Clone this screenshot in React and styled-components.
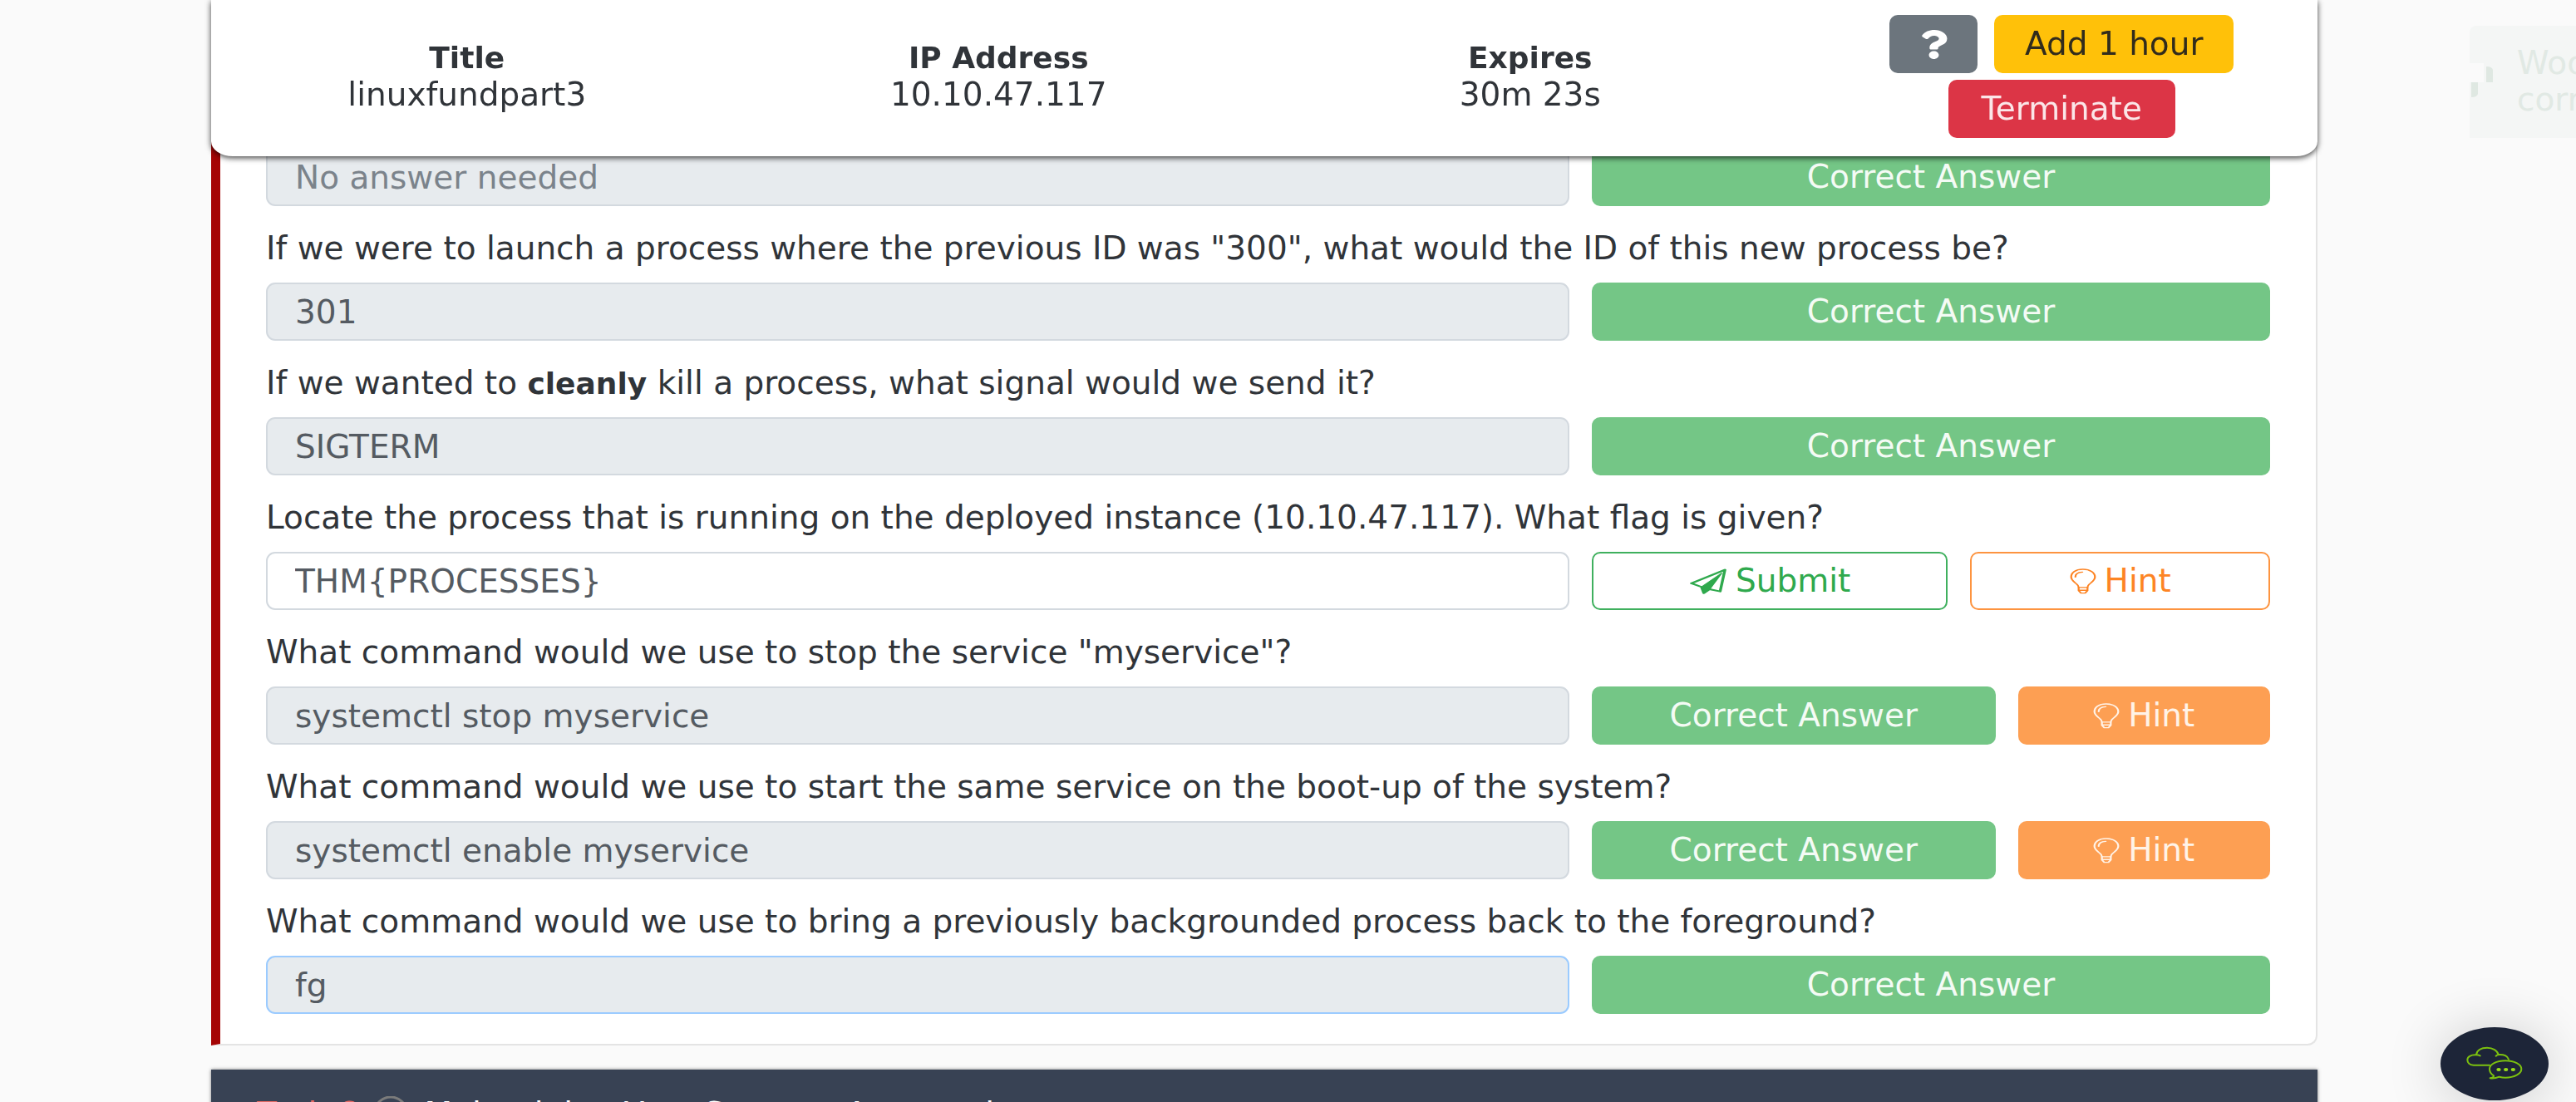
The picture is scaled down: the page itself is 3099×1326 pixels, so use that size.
import React from "react";
import styled, { createGlobalStyle, css } from "styled-components";
import { FaQuestion } from "react-icons/fa";

const GlobalStyle = createGlobalStyle`
  *, *::before, *::after { box-sizing: border-box; }
  html, body { margin: 0; }
  body, button, input {
    font-family: "DejaVu Sans", "Noto Sans", sans-serif;
    font-size: 39px;
    line-height: 44px;
  }
  b { font-size: 36px; }
  body { background: #fafafa; color: #303439; }
`;

const Shell = styled.div`
  height: 100vh;
  overflow: hidden;
  padding: 120px 311px 0 254px;
`;

const MachineBar = styled.header`
  position: fixed;
  z-index: 2;
  top: 0;
  left: 254px;
  right: 311px;
  padding: 18px 0 22px;
  background: #fff;
  border-radius: 0 0 26px 26px / 0 0 18px 18px;
  box-shadow: 0 2px 7px rgba(0, 0, 0, 0.75);
`;

const MachineGrid = styled.div`
  display: grid;
  grid-template-columns: repeat(4, 1fr);
  align-items: center;
  margin: 0 -12px;
  text-align: center;
`;

const FactName = styled.div`
  font-size: 36px;
  font-weight: 700;
`;

const Controls = styled.div`
  display: flex;
  flex-wrap: wrap;
  justify-content: center;
  gap: 8px 20px;
  padding: 0 60px;
`;

const tones = {
  grey: css`background: #6c757d; color: #fff;`,
  yellow: css`background: #ffc109; color: #322c1c;`,
  red: css`background: #dc3546; color: #fbe6e8;`,
  green: css`background: #74c686; color: #f4fbf5;`,
  orange: css`background: #fd9f53; color: #fff3e8;`,
  outlineGreen: css`background: #fff; border-color: #3fb05e; color: #2fa94d;`,
  outlineOrange: css`background: #fff; border-color: #fd9440; color: #fd8424;`,
};

const Button = styled.button`
  display: flex;
  align-items: center;
  justify-content: center;
  gap: 10px;
  height: 70px;
  min-width: ${(p) => (p.$width ? `${p.$width}px` : "0")};
  padding: 0 12px;
  border: 2px solid transparent;
  background-clip: border-box;
  border-radius: 10px;
  white-space: nowrap;
  ${(p) => tones[p.$tone]}
  ${(p) => !p.$tone.startsWith("outline") && "border: 0;"}
`;

const QuestionMark = styled(FaQuestion)`
  width: 33px;
  height: 35px;
`;

const Card = styled.main`
  display: grid;
  gap: 29px;
  padding: 58px 55px 36px;
  background: #fff;
  border: solid #e4e4e4;
  border-width: 0 2px 2px 0;
  border-left: 11px solid #a50505;
  border-radius: 0 0 12px 0;
`;

const Question = styled.section`
  display: grid;
  gap: 19px;
`;

const QuestionText = styled.label`
  display: block;
  height: 44px;
  white-space: nowrap;
`;

const AnswerRow = styled.div`
  display: grid;
  grid-template-columns: 98fr 51fr;
  gap: 27px;
`;

const AnswerInput = styled.input`
  min-width: 0;
  width: 100%;
  height: 70px;
  padding: 0 33px;
  border: 2px solid ${(p) => (p.$active ? "#9bcbff" : "#d3d9df")};
  border-radius: 11px;
  background: ${(p) => (p.readOnly ? "#e7ebee" : "#fff")};
  color: #555b62;
  outline: none;
  &::placeholder { color: #7b838b; opacity: 1; }
`;

const Actions = styled.div`
  display: grid;
  grid-template-columns: ${(p) => p.$columns};
  gap: 27px;
`;

const TaskHeader = styled.section`
  display: flex;
  align-items: center;
  gap: 18px;
  margin-top: 29px;
  padding: 32px 55px;
  background: #384254;
  color: #fff;
  box-shadow: 0 0 4px rgba(0, 0, 0, 0.5);
`;

const TaskNumber = styled.span`
  color: #e96a64;
`;

const TaskTitle = styled.span`
  flex: 1;
`;

const Toast = styled.aside`
  position: fixed;
  top: 31px;
  right: 0;
  width: 128px;
  height: 135px;
  padding: 23px 0 0 57px;
  overflow: hidden;
  white-space: nowrap;
  background: #f4f6f5;
  border-radius: 8px 0 0 0;
  color: #e1e9e4;
`;

const ToastMark = styled.svg`
  position: absolute;
  left: 0;
  top: 45px;
  width: 30px;
  height: 44px;
`;

const ChatButton = styled.button`
  position: fixed;
  right: 33px;
  bottom: 2px;
  display: grid;
  place-items: center;
  width: 130px;
  height: 88px;
  padding: 0;
  border: 0;
  border-radius: 50%;
  background: #1d2538;
  box-shadow: 0 4px 70px rgba(0, 0, 0, 0.2);
`;

const stroke = { fill: "none", stroke: "currentColor", strokeLinejoin: "round", strokeLinecap: "round" };

const PlaneIcon = () => (
  <svg width="46" height="31" viewBox="257 128 80 92" preserveAspectRatio="none" aria-hidden="true" {...stroke} strokeWidth="6">
    <path d="M332 133 322 210 300 202 288 216 283 194 262 181Z" />
    <path d="M283 194 325 145 300 202 288 216Z" fill="currentColor" strokeWidth="3" />
  </svg>
);

const BulbIcon = () => (
  <svg width="32" height="31" viewBox="1036 130 57 91" preserveAspectRatio="none" aria-hidden="true" {...stroke} strokeWidth="4">
    <path d="M1064 133C1048 133 1039 145 1039 160 1039 171 1045 177 1050 184 1053 188 1055 192 1055 197H1074C1074 192 1076 188 1079 184 1084 177 1090 171 1090 160 1090 145 1080 133 1064 133Z" />
    <path d="M1048 160C1048 150 1053 144 1063 143M1055 197V208L1060 217H1069L1074 208V197M1056 207H1073" />
  </svg>
);

const CloudChatIcon = () => (
  <svg width="68" height="42" viewBox="202 122 204 126" aria-hidden="true" fill="none" stroke="#7cc10f" strokeWidth="6" strokeLinecap="round" strokeLinejoin="round">
    <path d="M286 190H228C213 190 206 180 206 171 206 160 218 152 238 153 240 136 256 127 277 127 298 127 315 138 318 152 338 150 352 158 355 169M238 153q8 0 14 3M318 152q-7 2-9 5" />
    <path d="M301 228C290 222 286 213 286 204 286 187 311 174 343 174 375 174 401 187 401 204 401 221 375 235 343 235 335 235 328 234 321 232 312 236 300 239 288 237 297 235 302 233 301 228Z" />
    <g fill="#9be01a" stroke="none">
      <ellipse cx="319" cy="206" rx="8" ry="6" />
      <ellipse cx="345" cy="206" rx="8" ry="6" />
      <ellipse cx="371" cy="206" rx="8" ry="6" />
    </g>
  </svg>
);

const facts = [
  ["Title", "linuxfundpart3"],
  ["IP Address", "10.10.47.117"],
  ["Expires", "30m 23s"],
];

const questions = [
  { id: "q0", placeholder: "No answer needed", answer: "" },
  { id: "q1", text: 'If we were to launch a process where the previous ID was "300", what would the ID of this new process be?', answer: "301" },
  { id: "q2", text: <>If we wanted to <b>cleanly</b> kill a process, what signal would we send it?</>, answer: "SIGTERM" },
  { id: "q3", text: "Locate the process that is running on the deployed instance (10.10.47.117). What flag is given?", answer: "THM{PROCESSES}", open: true, hint: true },
  { id: "q4", text: 'What command would we use to stop the service "myservice"?', answer: "systemctl stop myservice", hint: true },
  { id: "q5", text: "What command would we use to start the same service on the boot-up of the system?", answer: "systemctl enable myservice", hint: true },
  { id: "q6", text: "What command would we use to bring a previously backgrounded process back to the foreground?", answer: "fg", active: true },
];

function QuestionItem({ id, text, answer, placeholder, open, hint, active }) {
  const columns = !hint ? "1fr" : open ? "19fr 16fr" : "8fr 5fr";
  return (
    <Question>
      {text && <QuestionText htmlFor={id}>{text}</QuestionText>}
      <AnswerRow>
        <AnswerInput
          id={id}
          defaultValue={answer}
          placeholder={placeholder}
          aria-label={text ? undefined : placeholder}
          readOnly={!open}
          $active={active}
        />
        <Actions $columns={columns}>
          {open ? (
            <Button type="button" $tone="outlineGreen"><PlaneIcon />Submit</Button>
          ) : (
            <Button type="button" $tone="green">Correct Answer</Button>
          )}
          {hint && (
            <Button type="button" $tone={open ? "outlineOrange" : "orange"}><BulbIcon />Hint</Button>
          )}
        </Actions>
      </AnswerRow>
    </Question>
  );
}

export default function App() {
  return (
    <>
      <GlobalStyle />
      <MachineBar>
        <MachineGrid>
          {facts.map(([name, value]) => (
            <div key={name}>
              <FactName>{name}</FactName>
              <div>{value}</div>
            </div>
          ))}
          <Controls>
            <Button type="button" $tone="grey" $width={106} aria-label="Help">
              <QuestionMark preserveAspectRatio="none" />
            </Button>
            <Button type="button" $tone="yellow" $width={288}>Add 1 hour</Button>
            <Button type="button" $tone="red" $width={273}>Terminate</Button>
          </Controls>
        </MachineGrid>
      </MachineBar>
      <Shell>
        <Card>
          {questions.map((q) => <QuestionItem key={q.id} {...q} />)}
        </Card>
        <TaskHeader>
          <TaskNumber>Task 6</TaskNumber>
          <svg width="44" height="44" viewBox="0 0 44 44" fill="none" stroke="#7b7b7b" strokeWidth="3" aria-hidden="true">
            <ellipse cx="22" cy="22" rx="20" ry="21" />
          </svg>
          <TaskTitle>Maintaining Your System: Automation</TaskTitle>
          <svg width="38" height="32" viewBox="0 0 38 32" fill="none" stroke="#fff" strokeWidth="5" strokeLinecap="round" aria-hidden="true">
            <path d="M5 4 19 20 33 4" />
          </svg>
        </TaskHeader>
      </Shell>
      <Toast>
        <ToastMark viewBox="0 0 30 44" aria-hidden="true">
          <path d="M0 0h17v23H0z" fill="#fafafa" />
          <path d="M20 4q7 0 8 4v15h-8zM2 23h8v14q-1 4-8 4z" fill="#dfe8e2" />
        </ToastMark>
        <div>Woop</div>
        <div>correct</div>
      </Toast>
      <ChatButton type="button" aria-label="Open chat">
        <CloudChatIcon />
      </ChatButton>
    </>
  );
}
